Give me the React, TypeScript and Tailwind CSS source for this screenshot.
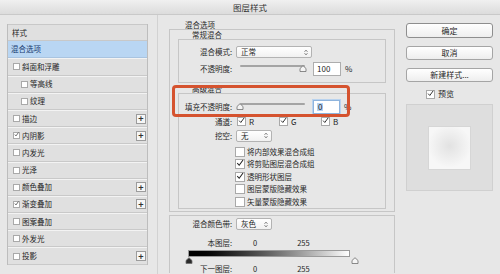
import React from "react";

const effects = [
  { label: "斜面和浮雕", checked: false, indent: false, plus: false },
  { label: "等高线", checked: false, indent: true, plus: false },
  { label: "纹理", checked: false, indent: true, plus: false },
  { label: "描边", checked: false, indent: false, plus: true },
  { label: "内阴影", checked: true, indent: false, plus: true },
  { label: "内发光", checked: false, indent: false, plus: false },
  { label: "光泽", checked: false, indent: false, plus: false },
  { label: "颜色叠加", checked: false, indent: false, plus: true },
  { label: "渐变叠加", checked: true, indent: false, plus: true },
  { label: "图案叠加", checked: false, indent: false, plus: false },
  { label: "外发光", checked: false, indent: false, plus: false },
  { label: "投影", checked: false, indent: false, plus: true },
];

const options = [
  { label: "将内部效果混合成组", checked: false },
  { label: "将剪贴图层混合成组", checked: true },
  { label: "透明形状图层", checked: true },
  { label: "图层蒙版隐藏效果", checked: false },
  { label: "矢量蒙版隐藏效果", checked: false },
];

function Tick({ className }: { className?: string }) {
  return (
    <svg viewBox="0 0 10 10" className={className} aria-hidden>
      <path d="M1.6 5.2 L4 7.8 L8.8 1.2" fill="none" stroke="#1f1f1f" strokeWidth="1.3" />
    </svg>
  );
}

function Box({ checked, size = "size-[10px]" }: { checked?: boolean; size?: string }) {
  return (
    <span className={`relative flex shrink-0 items-center justify-center border border-[#a9a9a9] bg-white ${size}`}>
      {checked && <Tick className="absolute -top-[1px] left-[0px] size-full" />}
    </span>
  );
}

function Arrows() {
  return (
    <svg viewBox="0 0 5 8" className="h-[7px] w-[4px]" aria-hidden>
      <path d="M0.8 3 L2.5 1.2 L4.2 3 M0.8 5 L2.5 6.8 L4.2 5" fill="none" stroke="#333" strokeWidth="0.9" />
    </svg>
  );
}

function Select({ value, width }: { value: string; width: string }) {
  return (
    <div
      className={`flex h-[12px] items-center justify-between rounded-[2px] border border-[#b3b3b3] bg-gradient-to-b from-white to-[#f1f1f1] pl-[4px] pr-[3px] ${width}`}
    >
      <span>{value}</span>
      <Arrows />
    </div>
  );
}

function Thumb({ fill = "#f4f4f4" }: { fill?: string }) {
  return (
    <svg viewBox="0 0 8 7" className="h-[7px] w-[8px]" aria-hidden>
      <path d="M1 6.5 L1 3.5 L4 0.7 L7 3.5 L7 6.5 Z" fill={fill} stroke="#6f6f6f" strokeWidth="0.8" />
    </svg>
  );
}

function Slider({ pos }: { pos: "start" | "end" }) {
  return (
    <div className="relative h-[14px] w-[73px]">
      <div className="mx-[4px] mt-[3px] h-[2px] rounded-full bg-[#a4a4a4]" />
      <div className={`absolute top-[3px] ${pos === "end" ? "right-[2px]" : "left-[0px]"}`}>
        <Thumb />
      </div>
    </div>
  );
}

export default function App() {
  return (
    <div className="flex h-[274px] w-[500px] flex-col overflow-hidden bg-[#e7e7e7] font-['Noto_Sans_CJK_SC','Noto_Sans',sans-serif] text-[7.5px] leading-[8px] text-[#1f1f1f]">
      <div className="flex h-[15px] shrink-0 items-center justify-center border-b border-[#c9c9c9] bg-gradient-to-b from-[#f0f0f0] to-[#dcdcdc] text-[8.5px] text-[#333]">
        图层样式
      </div>

      <div className="flex min-h-0 flex-1">
        {/* left: effects list */}
        <div className="w-[158px] shrink-0 border-r border-[#d2d2d2] pl-[7px] pt-[9px]">
          <div className="w-[141px] border-x border-[#bdbdbd]">
            <div className="flex h-[17.2px] items-center border-y border-[#c8c8c8] bg-[#e0e0e0] pl-[4px]">样式</div>
            <div className="flex h-[17.2px] items-center border-b border-[#a9c4e0] bg-[#b9d6f3] pl-[3px] text-[#163a70]">
              混合选项
            </div>
            {effects.map((e) => (
              <div
                key={e.label}
                className={`flex h-[17.2px] items-center justify-between border-b border-[#c9c9c9] border-t border-t-[#f3f3f3] bg-[#e0e0e0] pr-[1px] ${e.indent ? "pl-[13px]" : "pl-[5px]"}`}
              >
                <div className="flex items-center gap-[2px]">
                  <Box checked={e.checked} size="size-[7px]" />
                  <span>{e.label}</span>
                </div>
                {e.plus && (
                  <span className="flex size-[10px] items-center justify-center border border-[#9c9c9c] bg-[#f6f6f6] text-[9px] font-bold leading-none text-[#333]">
                    +
                  </span>
                )}
              </div>
            ))}
          </div>
        </div>

        {/* middle: blending options */}
        <div className="relative ml-[11px] w-[226px] shrink-0">
          <div className="pl-[16px] pt-[6px]">混合选项</div>
          <div className="border border-[#c6c6c6] px-[8px] pb-[2px]">
            <div className="mt-[1px] pl-[14px]">常规混合</div>
            <div className="flex h-[44px] flex-col gap-[4px] border border-[#c6c6c6] pt-[6px]">
              <div className="flex h-[12px] items-center gap-[4px]">
                <span className="w-[53px] text-right">混合模式:</span>
                <Select value="正常" width="w-[76px]" />
              </div>
              <div className="flex h-[14px] items-center gap-[4px]">
                <span className="w-[53px] text-right">不透明度:</span>
                <Slider pos="end" />
                <div className="flex h-[14px] w-[28px] items-center border border-[#adadad] bg-white pl-[3px] text-[8px]">
                  100
                </div>
                <span className="text-[8px]">%</span>
              </div>
            </div>

            <div className="mt-[2px] pl-[14px]">高级混合</div>
            <div className="flex h-[116px] flex-col border border-[#c6c6c6] pt-[6px]">
              <div className="flex h-[14px] items-center gap-[4px]">
                <span className="w-[53px] whitespace-nowrap text-right">填充不透明度:</span>
                <Slider pos="start" />
                <div className="flex h-[14px] w-[27px] items-center border border-[#8fb4dd] bg-white pl-[3px] text-[8px] shadow-[0_0_0_1px_#b9d3ef]">
                  <span className="bg-[#b5d3f5] px-[1px]">0</span>
                </div>
                <span className="text-[8px]">%</span>
              </div>
              <div className="mt-[2px] flex h-[12px] items-center gap-[4px]">
                <span className="w-[53px] text-right">通道:</span>
                {["R", "G", "B"].map((c) => (
                  <div key={c} className="flex w-[38px] items-center gap-[3px] pl-[1px] text-[8px]">
                    <Box checked size="size-[9px]" />
                    <span>{c}</span>
                  </div>
                ))}
              </div>
              <div className="mt-[2px] flex h-[12px] items-center gap-[4px]">
                <span className="w-[53px] text-right">挖空:</span>
                <Select value="无" width="w-[36px]" />
              </div>
              <div className="mt-[4px] flex flex-col">
                {options.map((o) => (
                  <div key={o.label} className="flex h-[12.5px] items-center gap-[2px] pl-[56px]">
                    <Box checked={o.checked} />
                    <span>{o.label}</span>
                  </div>
                ))}
              </div>
            </div>
          </div>

          <div className="mt-[3px] border-x border-t border-[#c6c6c6] pt-[2px]">
            <div className="flex h-[12px] items-center gap-[4px]">
              <span className="w-[62px] text-right">混合颜色带:</span>
              <Select value="灰色" width="w-[36px]" />
            </div>
            <div className="mt-[9px] flex h-[8px] items-center">
              <span className="w-[62px] text-right">本图层:</span>
              <span className="ml-[21px]">0</span>
              <span className="ml-[40px]">255</span>
            </div>
            <div className="ml-[18px] mt-[3px] h-[7px] w-[162px] border border-[#9a9a9a] bg-gradient-to-r from-black to-white" />
            <div className="ml-[15px] flex w-[174px] justify-between">
              <Thumb fill="#2a2a2a" />
              <Thumb />
            </div>
            <div className="mt-[1px] flex h-[8px] items-center">
              <span className="w-[62px] text-right">下一图层:</span>
              <span className="ml-[21px]">0</span>
              <span className="ml-[40px]">255</span>
            </div>
          </div>

          {/* highlight annotation */}
          <div className="pointer-events-none absolute left-[3px] top-[70px] h-[32px] w-[178px] rounded-[4px] border-[3px] border-[#d5532f]" />
        </div>

        {/* right: buttons + preview */}
        <div className="ml-[11px] flex w-[87px] shrink-0 flex-col text-[8px]">
          <button className="mt-[8px] flex h-[15px] items-center justify-center rounded-[3px] border border-[#8e8e8e] bg-gradient-to-b from-white to-[#eeeeee]">
            确定
          </button>
          <button className="mt-[8px] flex h-[14px] items-center justify-center rounded-[3px] border border-[#a5a5a5] bg-gradient-to-b from-white to-[#eeeeee]">
            取消
          </button>
          <button className="mt-[8px] flex h-[14px] items-center justify-center rounded-[3px] border border-[#a5a5a5] bg-gradient-to-b from-white to-[#eeeeee]">
            新建样式...
          </button>
          <div className="mt-[7px] flex h-[10px] items-center gap-[3px] pl-[20px]">
            <Box checked size="size-[9px]" />
            <span>预览</span>
          </div>
          <div className="mt-[5px] flex h-[87px] items-center justify-center border border-[#d0d0d0] bg-[#dedede]">
            <div className="h-[44px] w-[43px] border border-[#d6d6d6] bg-[radial-gradient(circle_at_50%_45%,#e2e2e2,#f7f7f7_70%)]" />
          </div>
        </div>
      </div>
    </div>
  );
}
